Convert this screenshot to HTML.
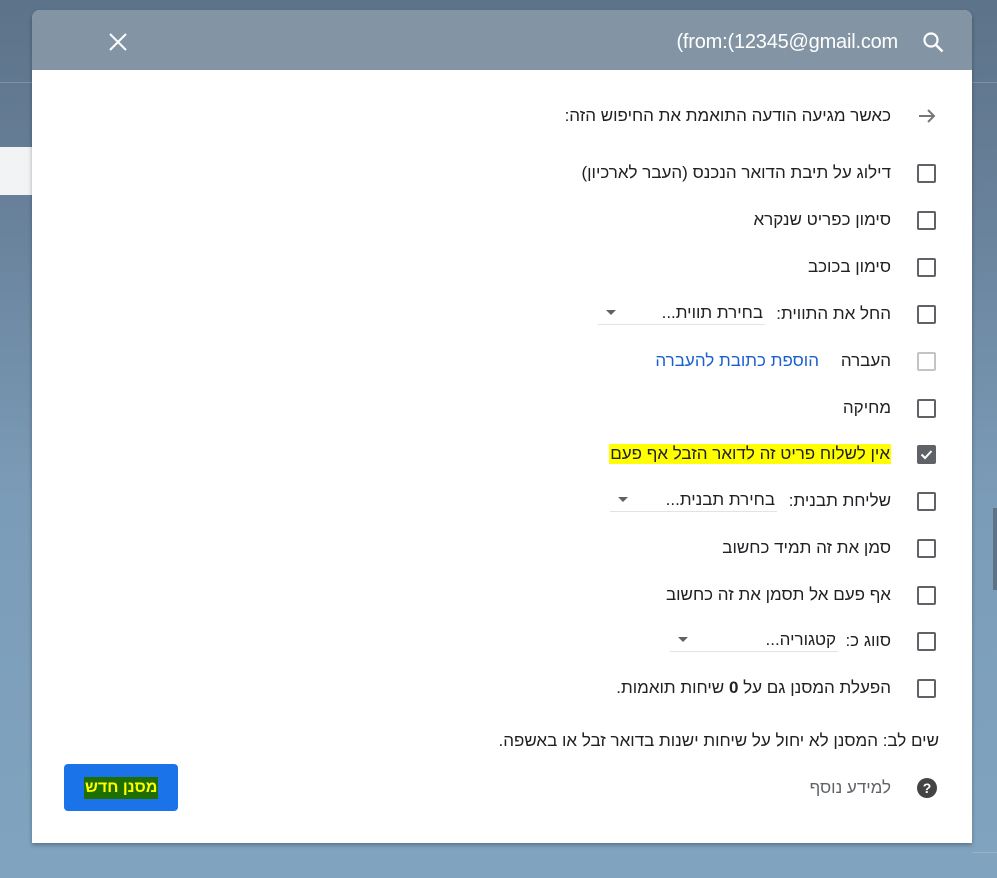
<!DOCTYPE html>
<html dir="ltr"><head><meta charset="utf-8"><style>
*{margin:0;padding:0;box-sizing:border-box}
body{width:997px;height:878px;overflow:hidden;position:relative;font-family:"Liberation Sans",Arial,sans-serif;background:linear-gradient(#5c7389 0px,#688099 200px,#7b9cb8 500px,#80a4c0 878px)}
.abs{position:absolute}
.t{position:absolute;right:106px;font-size:17px;color:#202124;direction:rtl;white-space:nowrap;line-height:20px}
.cb{position:absolute;left:917px;width:19px;height:19px;border:2px solid #5f6368;border-radius:2px}
.sel{position:absolute;height:22px;border-bottom:1px solid #e3e3e3;font-size:17px;color:#202124;direction:rtl;line-height:20px}
.arr{position:absolute;left:8px;top:7px;width:0;height:0;border-left:5px solid transparent;border-right:5px solid transparent;border-top:5px solid #5f6368}
</style></head><body>
<div class="abs" style="left:0;top:82px;width:997px;height:1px;background:#7d92a6"></div>
<div class="abs" style="left:0;top:147px;width:32px;height:48px;background:#f1f3f4"></div>
<div class="abs" style="left:993px;top:508px;width:4px;height:82px;background:#5f7388"></div>
<div class="abs" style="left:972px;top:852px;width:25px;height:1px;background:#9db4c8"></div>
<div class="abs" style="left:32px;top:10px;width:940px;height:833px;background:#fff;border-radius:8px 8px 0 0;box-shadow:0 2px 4px rgba(0,0,0,.3)"></div>
<div class="abs" style="left:32px;top:10px;width:940px;height:60px;background:#8395a5;border-radius:8px 8px 0 0"></div>
<svg class="abs" style="left:108px;top:32px" width="20" height="20" viewBox="0 0 20 20"><path d="M2 2L18 18M18 2L2 18" stroke="#fff" stroke-width="2"/></svg>
<div class="abs" style="left:560px;top:30px;width:338px;text-align:right;font-size:20px;color:#fff;line-height:24px;direction:ltr;unicode-bidi:bidi-override;letter-spacing:-0.2px">(from:(12345@gmail.com</div>
<svg class="abs" style="left:921px;top:30px" width="24" height="24" viewBox="0 0 24 24"><circle cx="10" cy="10" r="6.5" stroke="#fff" stroke-width="2.2" fill="none"/><path d="M15 15L21.5 21.5" stroke="#fff" stroke-width="2.4"/></svg>
<svg class="abs" style="left:917px;top:106px" width="20" height="20" viewBox="0 0 20 20"><path d="M2 10H17M11 4L17 10L11 16" stroke="#777" stroke-width="2" fill="none"/></svg>
<div class="t" style="top:106px">כאשר מגיעה הודעה התואמת את החיפוש הזה:</div>

<div class="cb" style="top:164px"></div><div class="t" style="top:163px">דילוג על תיבת הדואר הנכנס (העבר לארכיון)</div>
<div class="cb" style="top:211px"></div><div class="t" style="top:210px">סימון כפריט שנקרא</div>
<div class="cb" style="top:258px"></div><div class="t" style="top:257px">סימון בכוכב</div>
<div class="cb" style="top:305px"></div><div class="t" style="top:304px">החל את התווית:</div>
<div class="sel" style="left:598px;top:303px;width:167px"><span style="position:absolute;right:2px">בחירת תווית...</span><div class="arr"></div></div>
<div class="cb" style="top:352px;border-color:#c4c4c4"></div><div class="t" style="top:351px">העברה</div>
<div class="abs" style="left:600px;top:351px;width:219px;text-align:right;direction:rtl;font-size:17px;color:#1a5fd0;line-height:20px">הוספת כתובת להעברה</div>
<div class="cb" style="top:399px"></div><div class="t" style="top:398px">מחיקה</div>
<div class="cb" style="top:445px;background:#5f6368;border-color:#5f6368"><svg width="15" height="15" viewBox="0 0 15 15" style="position:absolute;left:0;top:0"><path d="M2.5 7.5L6 11L12.5 4" stroke="#fff" stroke-width="2" fill="none"/></svg></div>
<div class="t" style="top:444px;background:#ffff00;padding:0 1px">אין לשלוח פריט זה לדואר הזבל אף פעם</div>
<div class="cb" style="top:492px"></div><div class="t" style="top:491px">שליחת תבנית:</div>
<div class="sel" style="left:610px;top:490px;width:167px"><span style="position:absolute;right:2px">בחירת תבנית...</span><div class="arr"></div></div>
<div class="cb" style="top:539px"></div><div class="t" style="top:538px">סמן את זה תמיד כחשוב</div>
<div class="cb" style="top:586px"></div><div class="t" style="top:585px">אף פעם אל תסמן את זה כחשוב</div>
<div class="cb" style="top:632px"></div><div class="t" style="top:631px">סווג כ:</div>
<div class="sel" style="left:670px;top:630px;width:168px"><span style="position:absolute;right:2px">קטגוריה...</span><div class="arr"></div></div>
<div class="cb" style="top:679px"></div><div class="t" style="top:678px">הפעלת המסנן גם על <b>0</b> שיחות תואמות.</div>
<div class="t" style="top:731px;right:58px">שים לב: המסנן לא יחול על שיחות ישנות בדואר זבל או באשפה.</div>
<svg class="abs" style="left:916px;top:777px" width="22" height="22" viewBox="0 0 22 22"><circle cx="11" cy="11" r="10" fill="#444"/><text x="11" y="16" text-anchor="middle" font-size="14" font-weight="bold" fill="#fff" font-family="Liberation Sans">?</text></svg>
<div class="t" style="top:778px;color:#5f6368">למידע נוסף</div>
<div class="abs" style="left:64px;top:764px;width:114px;height:47px;background:#1a73e8;border-radius:4px"></div>
<div class="abs" style="left:84px;top:777px;height:22px;padding:0 1px;background:#1f6f00;color:#ffff00;font-size:16px;font-weight:bold;line-height:22px;direction:rtl">מסנן חדש</div>
</body></html>
